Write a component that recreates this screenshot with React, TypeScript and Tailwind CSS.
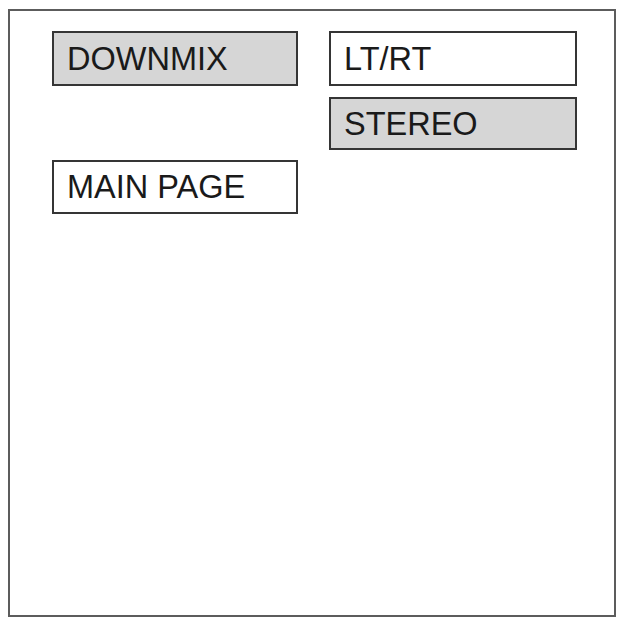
const font = { fontFamily: '"Liberation Sans", Arial, sans-serif' };

function MenuBox({ label, selected = false, h = 'h-[55px]' }: { label: string; selected?: boolean; h?: string }) {
  return (
    <div
      className={`flex items-center border-2 border-[#353535] pl-[13px] text-[32.5px] leading-none text-[#1a1a1a] ${h} ${
        selected ? 'bg-[#d6d6d6]' : 'bg-white'
      }`}
      style={font}
    >
      <span className="pt-[1px]">{label}</span>
    </div>
  );
}

export default function App() {
  return (
    <div className="w-[618px] h-[618px] bg-white pl-[8px] pt-[9px]">
      <div className="w-[608px] h-[608px] border-2 border-[#5c5c5c] pl-[42px] pt-[20px]">
        <div className="flex gap-[31px]">
          {/* left column: current menu + back to main */}
          <div className="flex w-[246px] flex-col gap-[74px]">
            <MenuBox label="DOWNMIX" selected />
            <MenuBox label="MAIN PAGE" h="h-[54px]" />
          </div>
          {/* right column: downmix options */}
          <div className="flex w-[248px] flex-col gap-[11px]">
            <MenuBox label="LT/RT" />
            <MenuBox label="STEREO" selected h="h-[53px]" />
          </div>
        </div>
      </div>
    </div>
  );
}
